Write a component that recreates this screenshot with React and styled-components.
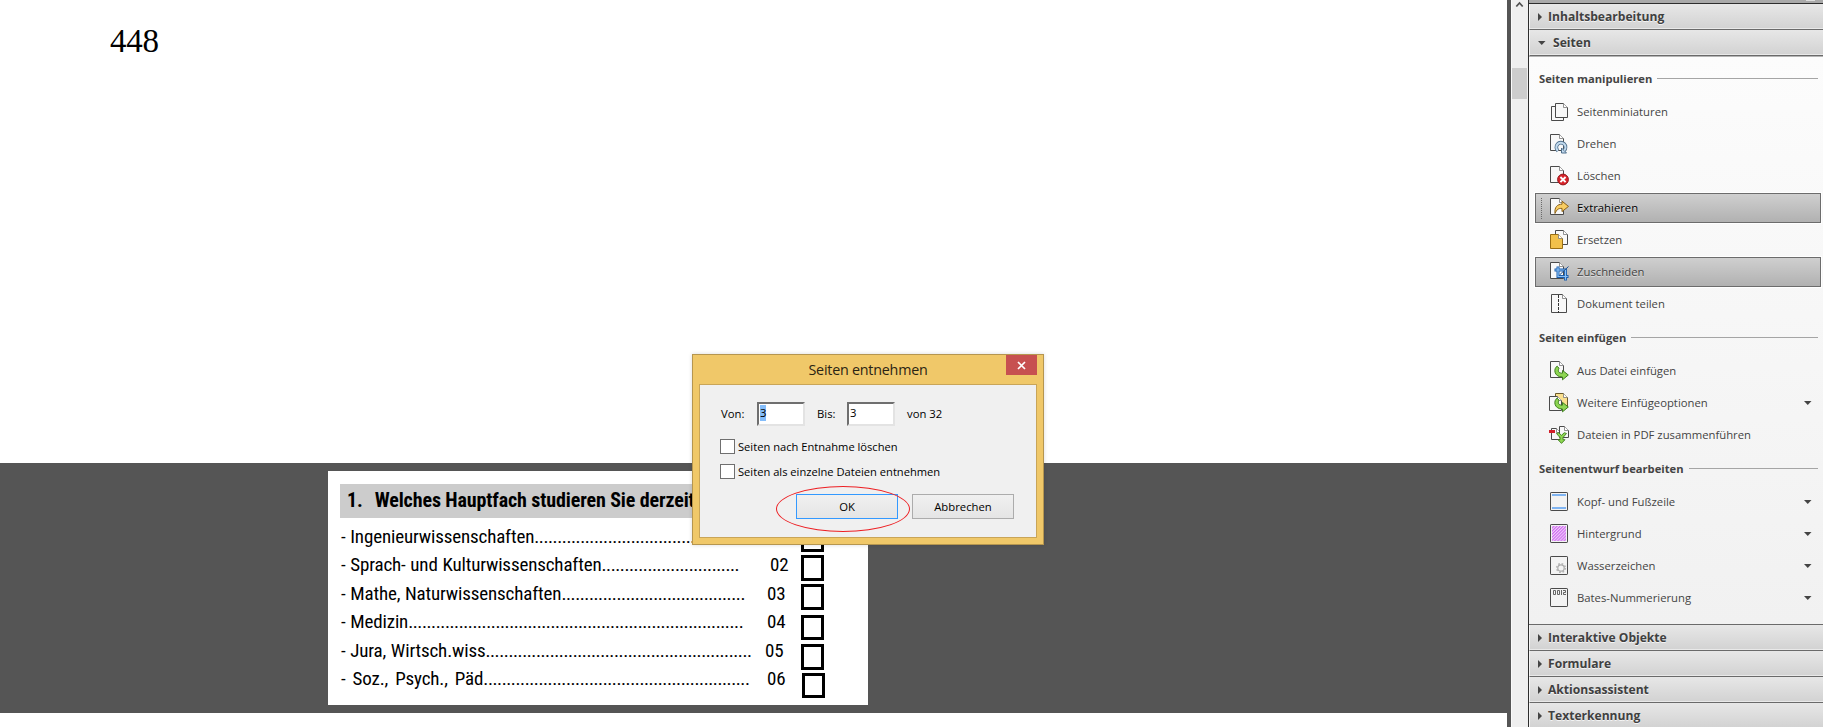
import React from "react";
import styled, { createGlobalStyle, css } from "styled-components";

const Global = createGlobalStyle`
  * { box-sizing: border-box; }
  body { margin: 0; overflow: hidden; font: 11.3px "Open Sans", "Noto Sans", sans-serif; }
`;

const Window = styled.div`
  position: relative;
  display: flex;
  width: 1823px;
  height: 727px;
  overflow: hidden;
  background: #555;
`;

/* ---------- document ---------- */
const DocumentArea = styled.main`
  width: 1507px;
  margin-right: 4px;
  display: flex;
  flex-direction: column;
`;
const BlankPage = styled.section`
  height: 463px;
  background: #fff;
  padding: 21px 0 0 110px;
`;
const PageNumber = styled.div`
  font: 33px/40px "Liberation Serif", serif;
  color: #000;
  letter-spacing: -0.2px;
`;
const Gutter = styled.section`
  height: 250px;
  padding: 8px 0 0 328px;
`;
const NextPage = styled.section`
  flex: 1;
  background: #fff;
`;
const Card = styled.article`
  width: 540px;
  height: 234px;
  padding: 13px 12px 0;
  background: #fff;
  color: #000;
  font: 19px/28.4px "Roboto Condensed", "Roboto", sans-serif;
  font-stretch: condensed;
`;
const Question = styled.h2`
  display: flex;
  gap: 12px;
  height: 34px;
  margin: 0;
  padding-left: 7px;
  background: #ccc;
  font-size: 20px;
  line-height: 33px;
  font-weight: 700;
  letter-spacing: -0.12px;
  white-space: nowrap;
`;
const Answers = styled.div`
  display: flex;
  padding: 5px 0 0 1px;
`;
const AnswerList = styled.div`
  width: 460px;
`;
const AnswerRow = styled.div`
  display: grid;
  grid-template-columns: 424px auto;
  height: 28.4px;
  white-space: nowrap;
  letter-spacing: -0.15px;
  word-spacing: ${(p) => p.$wordGap || 0.5}px;
`;
const Leader = styled.span`
  letter-spacing: -0.42px;
`;
const Code = styled.span`
  padding-left: ${(p) => p.$indent}px;
`;
const Boxes = styled.div`
  display: flex;
  flex-direction: column;
  padding-top: 3px;
`;
const Box = styled.i`
  width: 23px;
  height: ${(p) => p.$h || 26}px;
  margin-bottom: ${(p) => p.$gap || 3}px;
  margin-left: ${(p) => p.$shift || 0}px;
  border: 3px solid #000;
`;

/* ---------- scrollbar ---------- */
const Scrollbar = styled.div`
  width: 17px;
  border-left: 1px solid #fafafa;
  background: #efefef;
  display: flex;
  flex-direction: column;
  svg { display: block; margin: 0 0 0 3px; }
`;
const Thumb = styled.div`
  width: 15px;
  height: 31px;
  margin-top: 58px;
  background: #cdcdcd;
`;

/* ---------- tools panel ---------- */
const Panel = styled.aside`
  width: 295px;
  border-left: 1px solid #2d2d2d;
  background: #f2f2f2;
  color: #444;
`;
const PanelTop = styled.div`
  height: 4px;
  padding-left: 277px;
  border-bottom: 1px solid #2d2d2d;
  background: #a9a9a9;
  &::after { content: ""; display: block; width: 9px; height: 1px; background: #ddd; }
`;
const SectionHeader = styled.div`
  display: flex;
  align-items: center;
  height: 26px;
  padding: 1px 0 0 8px;
  gap: ${(p) => (p.$open ? 7 : 6)}px;
  border-bottom: 1px solid #6a6a6a;
  border-left: 1px solid #f4f4f4;
  box-shadow: inset 0 -1px #e9e9e9;
  background: linear-gradient(#e7e7e7, #d2d2d2);
  color: #404040;
  font-size: 12.1px;
  font-weight: 700;
  line-height: 16px;
  text-shadow: 0 1px #f4f4f4;
  svg { display: block; }
`;
const SectionBody = styled.div`
  height: 569px;
  padding-top: 4px;
  border-top: 1px solid #b5b5b5;
  border-bottom: 1px solid #6a6a6a;
  background: linear-gradient(#fcfcfc, #f1f1f1);
`;
const GroupTitle = styled.h3`
  display: flex;
  align-items: center;
  gap: 5px;
  height: 35px;
  margin: 0;
  padding: 0 5px 0 10px;
  font-size: 11.2px;
  font-weight: 700;
  white-space: nowrap;
  &::after { content: ""; flex: 1; height: 1px; background: #a5a5a5; }
`;
const ToolList = styled.div`
  display: flex;
  flex-direction: column;
  gap: 2px;
  padding: 1px 2px 1px 6px;
`;
const Tool = styled.div`
  display: flex;
  align-items: center;
  height: 30px;
  padding-left: 14px;
  white-space: nowrap;
  svg { display: block; flex: none; }
  ${(p) =>
    p.$active &&
    css`
      padding-left: 13px;
      border: 1px solid #6c6c6c;
      background: linear-gradient(#cfcfcf, #b1b1b1);
      box-shadow: 0 0 0 1px #fff;
      text-shadow: 0 1px #ddd;
    `}
  ${(p) =>
    p.$grip &&
    css`
      color: #000;
      padding-left: 4px;
    `}
`;
const Grip = styled.span`
  width: 3px;
  height: 21px;
  margin-right: 6px;
  background: conic-gradient(from 90deg at 1px 1px, transparent 75%, #6a6a6a 0) 0 0 / 2px 2px;
`;
const ToolLabel = styled.span`
  flex: 1;
  padding: 0 0 1px 8px;
`;
const Caret = styled.span`
  width: 8px;
  margin-right: 9px;
  svg { display: block; }
`;

/* ---------- dialog ---------- */
const Dialog = styled.div`
  position: absolute;
  left: 692px;
  top: 354px;
  width: 352px;
  height: 191px;
  padding: 0 6px 6px;
  border: 1px solid #b6964f;
  background: #f0c869;
  color: #000;
  box-shadow: 0 0 4px rgba(0, 0, 0, 0.15);
`;
const TitleBar = styled.div`
  position: relative;
  height: 29px;
  text-align: center;
  font-size: 14.3px;
  line-height: 29px;
  letter-spacing: -0.22px;
  color: #2b2414;
`;
const Close = styled.button`
  position: absolute;
  right: 0;
  top: 0;
  width: 31px;
  height: 20px;
  padding: 0;
  border: 0;
  background: #c75050;
  svg { display: block; margin: 0 auto; }
`;
const DialogBody = styled.div`
  height: 154px;
  padding: 17px 21px 0;
  border: 1px solid #c9a558;
  background: #f0f0f0;
`;
const RangeRow = styled.div`
  display: flex;
  align-items: center;
  height: 24px;
  margin-bottom: 14px;
  > span { padding-bottom: 1px; }
`;
const RangeLabel = styled.span`
  width: ${(p) => p.$w}px;
`;
const Field = styled.div`
  width: 48px;
  height: 24px;
  margin-right: ${(p) => p.$after}px;
  padding: 0 0 0 1px;
  border: 2px solid;
  border-color: #6f6f6f #e3e3e3 #e3e3e3 #6f6f6f;
  background: #fff;
  line-height: 15px;
  span {
    display: block;
    width: 6px;
    height: 16px;
    margin-top: 1px;
    background: ${(p) => (p.$selected ? "#84bdfb" : "transparent")};
  }
`;
const CheckRow = styled.label`
  display: flex;
  align-items: center;
  gap: 3px;
  height: 13px;
  margin: 0 0 12px -1px;
  font-size: 11.15px;
  letter-spacing: 0;
  white-space: nowrap;
  &::before { content: ""; width: 13px; height: 13px; border: 1px solid #6f6f6f; background: #fff; }
`;
const Buttons = styled.div`
  position: relative;
  display: flex;
  justify-content: flex-end;
  gap: 14px;
  margin: 16px 1px 0 0;
`;
const Button = styled.button`
  width: 102px;
  height: 25px;
  padding: 0;
  border: 1px solid ${(p) => (p.$primary ? "#3399ff" : "#acacac")};
  background: linear-gradient(#f0f0f0, #e5e5e5);
  font: inherit;
  color: #000;
`;
const Marker = styled.div`
  position: absolute;
  left: 55px;
  top: -8px;
  width: 134px;
  height: 46px;
  border: 1px solid #ed2024;
  border-radius: 50%;
`;

/* ---------- icons ---------- */
const Page = ({ x = 1.5, y = 0.5, w = 13, h = 16, fill = "#f8f8f8", stroke = "#4a4a4a" }) => (
  <g fill={fill} stroke={stroke} strokeLinejoin="round">
    <path d={`M${x} ${y}h${w - 4}l4 4v${h - 4}h${-w}z`} />
    <path d={`M${x + w - 4} ${y}v4h4`} fill="#fff" stroke="#777" strokeWidth=".8" />
  </g>
);
const GreenArrow = () => (
  <path
    d="M8.2 5.2C4.5 7 4.4 16 13.5 16v2.8l5.8-4.8-5.8-4.6v2.8c-4 .1-5-2-3.5-5z"
    fill="#8ed652" stroke="#3f7f1f" strokeLinejoin="round"
  />
);
const Square = () => <rect x="1.5" y=".5" width="17" height="18" rx=".6" fill="#f3f3f3" stroke="#4a4a4a" />;

const icons = {
  thumbs: <><Page x={2.5} y={4.5} w={12} h={14} /><Page x={6.5} y={1.5} w={12} h={14} /></>,
  rotate: (
    <>
      <Page />
      <path d="M9 16.800a4.600 4.600 0 1 1 6.200-.3" fill="none" stroke="#4f6f8c" strokeWidth="3.600" />
      <path d="M12.500 14v5h5z" fill="#c3dbef" stroke="#4f6f8c" />
      <path d="M9 16.800a4.600 4.600 0 1 1 6.200-.3" fill="none" stroke="#c3dbef" strokeWidth="2" />
    </>
  ),
  remove: (
    <>
      <Page />
      <circle cx="14" cy="13.500" r="5.400" fill="#d8232a" stroke="#94181c" />
      <path d="M11.400 11l5.200 5.200M16.600 11l-5.200 5.200" stroke="#fff" strokeWidth="1.900" />
    </>
  ),
  extract: (
    <>
      <Page />
      <path d="M6 15.500c-.7-6.500 2.400-9.300 7-9.300V3.200l6.500 5.200-6.500 5.200v-3.200c-3.500-.2-5.300 1-7 5.100z"
        fill="#f8cd63" stroke="#8a6018" strokeLinejoin="round" />
    </>
  ),
  replace: (
    <>
      <Page x={6.5} y={0.5} w={12} h={14} />
      <Page x={1.5} y={4.5} w={12} h={14} fill="#f2c14b" stroke="#9a6f14" />
    </>
  ),
  crop: (
    <>
      <Page />
      <path d="M9 4.500v10h10.500M5.500 8h11v10.500" fill="none" stroke="#1d5fae" strokeWidth="3" />
      <path d="M9 5.300v9.200h9.700M6.300 8h10.200v9.700" fill="none" stroke="#8cc2f5" strokeWidth="1.200" />
      <path d="M10.500 13L19.500 4.500" stroke="#1d4f90" />
    </>
  ),
  split: (
    <>
      <Page x={2.5} y={0.5} w={15} h={18} />
      <path d="M9.500 1v18" stroke="#333" strokeDasharray="3 1" />
    </>
  ),
  insert: <><Page /><GreenArrow /></>,
  insertMore: (
    <>
      <Page x={6.5} y={0.5} w={12} h={14} fill="#fbe08e" stroke="#6b5a2a" />
      <Page x={0.5} y={3.5} w={12} h={14} />
      <GreenArrow />
    </>
  ),
  merge: (
    <>
      <Page x={2.5} y={3.5} w={9} h={11} />
      <Page x={10.5} y={1.5} w={9} h={11} />
      <path d="M0 5h6v3H0z" fill="#d3202a" />
      <path d="M7.500 8.500l2.200-.8 2.800 2.600 2.800-2.600 2.200.8-3.500 4v2.200h2l-3.500 3.700-3.500-3.700h2v-2.200z"
        fill="#8ed652" stroke="#3f7f1f" strokeWidth=".9" strokeLinejoin="round" />
    </>
  ),
  headFoot: <><Square /><path d="M3 2h14v2H3zM3 15h14v2H3z" fill="#7fb4f2" /></>,
  background: (
    <>
      <defs>
        <pattern id="hatch" width="2.200" height="2.200" patternUnits="userSpaceOnUse" patternTransform="rotate(45)">
          <rect width="2.200" height="2.200" fill="#f0cdfa" />
          <rect width="1.100" height="2.200" fill="#cf6cf0" />
        </pattern>
      </defs>
      <Square />
      <rect x="3" y="2" width="14" height="15" fill="url(#hatch)" />
    </>
  ),
  watermark: (
    <>
      <Square />
      <circle cx="12" cy="12" r="4.300" fill="none" stroke="#b5b5b5" strokeWidth="1.600" strokeDasharray="1.700 1.680" />
      <circle cx="12" cy="12" r="3.200" fill="#f3f3f3" stroke="#ababab" strokeWidth="1.200" />
    </>
  ),
  bates: (
    <>
      <Square />
      <g fill="none" stroke="#555" strokeWidth=".9">
        <path d="M4.500 2.500h2v4h-2zM8.500 2.500h2v4h-2zM12.500 2v5M14 2.500h2.500v2H14.500v2H17" />
      </g>
    </>
  ),
};
const Icon = ({ name }) => <svg width="20" height="20" viewBox="0 0 20 20">{icons[name]}</svg>;
const Down = () => <svg width="8" height="4"><path d="M0 0h7.500L3.750 4z" fill="#444" /></svg>;
const Right = () => <svg width="4" height="8"><path d="M0 0v8l4-4z" fill="#444" /></svg>;

/* ---------- data ---------- */
const groups = [
  ["Seiten manipulieren", [
    ["thumbs", "Seitenminiaturen"],
    ["rotate", "Drehen"],
    ["remove", "Löschen"],
    ["extract", "Extrahieren", { active: true, grip: true }],
    ["replace", "Ersetzen"],
    ["crop", "Zuschneiden", { active: true }],
    ["split", "Dokument teilen"],
  ]],
  ["Seiten einfügen", [
    ["insert", "Aus Datei einfügen"],
    ["insertMore", "Weitere Einfügeoptionen", { menu: true }],
    ["merge", "Dateien in PDF zusammenführen"],
  ]],
  ["Seitenentwurf bearbeiten", [
    ["headFoot", "Kopf- und Fußzeile", { menu: true }],
    ["background", "Hintergrund", { menu: true }],
    ["watermark", "Wasserzeichen", { menu: true }],
    ["bates", "Bates-Nummerierung", { menu: true }],
  ]],
];
const answers = [
  { name: "- Ingenieurwissenschaften", dots: 38 },
  { name: "- Sprach- und Kulturwissenschaften", dots: 30, code: "02", indent: 5 },
  { name: "- Mathe, Naturwissenschaften", dots: 40, code: "03", indent: 2 },
  { name: "- Medizin", dots: 73, code: "04", indent: 2 },
  { name: "- Jura, Wirtsch.wiss", dots: 58, code: "05", indent: 0 },
  { name: "- Soz., Psych., Päd", dots: 58, code: "06", indent: 2, wordGap: 2.8 },
];

const Section = ({ title }) => <SectionHeader><Right />{title}</SectionHeader>;

export default function App() {
  return (
    <>
      <Global />
      <Window>
        <DocumentArea>
          <BlankPage><PageNumber>448</PageNumber></BlankPage>
          <Gutter>
            <Card>
              <Question><span>1.</span><span>Welches Hauptfach studieren Sie derzeit</span></Question>
              <Answers>
                <AnswerList>
                  {answers.map(({ name, dots, code, indent, wordGap }) => (
                    <AnswerRow key={name} $wordGap={wordGap}>
                      <span>{name}<Leader>{".".repeat(dots)}</Leader></span>
                      {code && <Code $indent={indent}>{code}</Code>}
                    </AnswerRow>
                  ))}
                </AnswerList>
                <Boxes>
                  <Box /><Box /><Box $gap={5} /><Box $h={25} $gap={4} /><Box /><Box $h={25} $shift={1} />
                </Boxes>
              </Answers>
            </Card>
          </Gutter>
          <NextPage />
        </DocumentArea>

        <Scrollbar>
          <svg width="9" height="10"><path d="M1.300 6.500L4.500 3l3.200 3.500" fill="none" stroke="#505050" strokeWidth="1.800" /></svg>
          <Thumb />
        </Scrollbar>

        <Panel>
          <PanelTop />
          <Section title="Inhaltsbearbeitung" />
          <SectionHeader $open><Down />Seiten</SectionHeader>
          <SectionBody>
            {groups.map(([title, tools]) => (
              <React.Fragment key={title}>
                <GroupTitle>{title}</GroupTitle>
                <ToolList>
                  {tools.map(([icon, label, opts = {}]) => (
                    <Tool key={label} $active={opts.active} $grip={opts.grip}>
                      {opts.grip && <Grip />}
                      <Icon name={icon} />
                      <ToolLabel>{label}</ToolLabel>
                      {opts.menu && <Caret><Down /></Caret>}
                    </Tool>
                  ))}
                </ToolList>
              </React.Fragment>
            ))}
          </SectionBody>
          <Section title="Interaktive Objekte" />
          <Section title="Formulare" />
          <Section title="Aktionsassistent" />
          <Section title="Texterkennung" />
        </Panel>

        <Dialog>
          <TitleBar>
            Seiten entnehmen
            <Close aria-label="Schließen">
              <svg width="9" height="9"><path d="M1 1l7 7M8 1L1 8" stroke="#fff" strokeWidth="1.700" /></svg>
            </Close>
          </TitleBar>
          <DialogBody>
            <RangeRow>
              <RangeLabel $w={36}>Von:</RangeLabel>
              <Field $after={12} $selected><span>3</span></Field>
              <RangeLabel $w={30}>Bis:</RangeLabel>
              <Field $after={12}><span>3</span></Field>
              <span>von 32</span>
            </RangeRow>
            <CheckRow>Seiten nach Entnahme löschen</CheckRow>
            <CheckRow>Seiten als einzelne Dateien entnehmen</CheckRow>
            <Buttons>
              <Button $primary>OK</Button>
              <Button>Abbrechen</Button>
              <Marker />
            </Buttons>
          </DialogBody>
        </Dialog>
      </Window>
    </>
  );
}
